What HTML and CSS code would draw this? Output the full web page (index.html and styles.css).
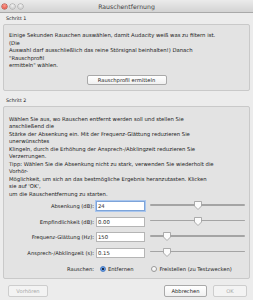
FILE: index.html
```html
<!DOCTYPE html>
<html lang="de">
<head>
    <meta charset="UTF-8">
    <title>Rauschentfernung</title>
    <link rel="stylesheet" href="styles.css">
</head>
<body>
    <div class="window">
        <div class="titlebar">
            <div class="lights">
                <span class="light red"></span>
                <span class="light"></span>
                <span class="light"></span>
            </div>
            <div class="title">Rauschentfernung</div>
        </div>

        <div class="content">
            <div class="group-label">Schritt 1</div>
            <div class="group step1">
                <div class="text">
                    <p>Einige Sekunden Rauschen auswählen, damit Audacity weiß was zu filtern ist.</p>
                    <p>(Die</p>
                    <p>Auswahl darf ausschließlich das reine Störsignal beinhalten!) Danach</p>
                    <p>"Rauschprofil</p>
                    <p>ermitteln" wählen.</p>
                </div>
                <div class="center">
                    <button class="btn profile-btn">Rauschprofil ermitteln</button>
                </div>
            </div>

            <div class="group-label label2">Schritt 2</div>
            <div class="group step2">
                <div class="text">
                    <p>Wählen Sie aus, wo Rauschen entfernt werden soll und stellen Sie</p>
                    <p>anschließend die</p>
                    <p>Stärke der Absenkung ein. Mit der Frequenz-Glättung reduzieren Sie</p>
                    <p>unerwünschtes</p>
                    <p>Klingeln, durch die Erhöhung der Ansprech-/Abklingzeit reduzieren Sie</p>
                    <p>Verzerrungen.</p>
                    <p>Tipp: Wählen Sie die Absenkung nicht zu stark, verwenden Sie wiederholt die</p>
                    <p>Vorhör-</p>
                    <p>Möglichkeit, um sich an das bestmögliche Ergebnis heranzutasten. Klicken</p>
                    <p>sie auf 'OK',</p>
                    <p>um die Rauschentfernung zu starten.</p>
                </div>

                <div class="params">
                    <div class="row">
                        <span class="label">Absenkung (dB):</span>
                        <span class="input focused">24</span>
                        <div class="slider">
                            <span class="track"></span>
                            <svg class="thumb" style="left: 44px" width="8" height="9" viewBox="0 0 8 9"><path d="M0.5 0.5 H7.5 V5 L4 8.5 L0.5 5 Z" fill="#fbfbfb" stroke="#9a9a9a" stroke-width="0.8"/></svg>
                        </div>
                    </div>
                    <div class="row">
                        <span class="label">Empfindlichkeit (dB):</span>
                        <span class="input">0.00</span>
                        <div class="slider">
                            <span class="track"></span>
                            <svg class="thumb" style="left: 44px" width="8" height="9" viewBox="0 0 8 9"><path d="M0.5 0.5 H7.5 V5 L4 8.5 L0.5 5 Z" fill="#fbfbfb" stroke="#9a9a9a" stroke-width="0.8"/></svg>
                        </div>
                    </div>
                    <div class="row">
                        <span class="label">Frequenz-Glättung (Hz):</span>
                        <span class="input">150</span>
                        <div class="slider">
                            <span class="track"></span>
                            <svg class="thumb" style="left: 13px" width="8" height="9" viewBox="0 0 8 9"><path d="M0.5 0.5 H7.5 V5 L4 8.5 L0.5 5 Z" fill="#fbfbfb" stroke="#9a9a9a" stroke-width="0.8"/></svg>
                        </div>
                    </div>
                    <div class="row">
                        <span class="label">Ansprech-/Abklingzeit (s):</span>
                        <span class="input">0.15</span>
                        <div class="slider">
                            <span class="track"></span>
                            <svg class="thumb" style="left: 13px" width="8" height="9" viewBox="0 0 8 9"><path d="M0.5 0.5 H7.5 V5 L4 8.5 L0.5 5 Z" fill="#fbfbfb" stroke="#9a9a9a" stroke-width="0.8"/></svg>
                        </div>
                    </div>
                    <div class="row radio-row">
                        <span class="label">Rauschen:</span>
                        <span class="radio checked"></span>
                        <span class="radio-text first">Entfernen</span>
                        <span class="radio"></span>
                        <span class="radio-text">Freistellen (zu Testzwecken)</span>
                    </div>
                </div>
            </div>

            <div class="footer">
                <button class="btn disabled wide">Vorhören</button>
                <div class="footer-right">
                    <button class="btn cancel">Abbrechen</button>
                    <button class="btn disabled ok">OK</button>
                </div>
            </div>
        </div>
    </div>
</body>
</html>
```

FILE: styles.css
```css
body {
    margin: 0;
    background-color: #ececec;
    font-family: "DejaVu Sans", "Liberation Sans", sans-serif;
    color: #222;
}

.window {
    width: 253px;
    height: 300px;
    background-color: #ececec;
    overflow: hidden;
}

.titlebar {
    height: 12px;
    background: linear-gradient(#ebebeb, #d3d3d3);
    border-bottom: 1px solid #a9a9a9;
    display: flex;
    align-items: center;
    position: relative;
}

.lights {
    display: flex;
    gap: 3px;
    padding-left: 2px;
}

.light {
    width: 5px;
    height: 5px;
    border-radius: 50%;
    background: radial-gradient(circle at 50% 35%, #f2f2f2, #bdbdbd);
    box-shadow: 0 0 0 0.5px #9c9c9c;
}

.light.red {
    background: radial-gradient(circle at 50% 35%, #ff9b8f, #d8402f);
    box-shadow: 0 0 0 0.5px #a33a2c;
}

.title {
    position: absolute;
    left: 0;
    right: 0;
    text-align: center;
    font-size: 6.2px;
    color: #444;
}

.content {
    padding: 0 3px;
}

.group-label {
    font-size: 4.8px;
    padding: 3px 0 0 3px;
    height: 6px;
    line-height: 6px;
}

.label2 {
    padding-top: 7px;
}

.group {
    background-color: #e3e3e3;
    border: 1px solid #c9c9c9;
    border-radius: 2px;
    margin-top: 2px;
}

.text {
    padding: 0 5px;
}

.text p {
    margin: 0;
    font-size: 5.3px;
    line-height: 7.5px;
    white-space: nowrap;
}

.step1 {
    padding: 7px 0 5px;
}

.step2 {
    padding: 9px 0 4px;
}

.center {
    display: flex;
    justify-content: center;
    margin-top: 5px;
}

.btn {
    font-family: inherit;
    font-size: 5.2px;
    color: #222;
    background: linear-gradient(#ffffff, #f0f0f0);
    border: 1px solid #a9a9a9;
    border-radius: 2px;
    padding: 0;
    height: 10px;
    line-height: 8px;
}

.profile-btn {
    width: 80px;
}

.params {
    margin-top: 3px;
    display: flex;
    flex-direction: column;
    gap: 5.5px;
}

.row {
    display: flex;
    align-items: center;
    height: 10px;
    white-space: nowrap;
}

.label {
    width: 90px;
    flex-shrink: 0;
    text-align: right;
    font-size: 5.2px;
    padding-right: 2px;
}

.input {
    box-sizing: border-box;
    width: 49px;
    height: 10px;
    background-color: #fff;
    border: 1px solid #b5b5b5;
    font-size: 5.3px;
    line-height: 8px;
    padding-left: 1px;
}

.input.focused {
    border-color: #7da4d9;
    box-shadow: 0 0 0 1px #a9c6ee;
}

.slider {
    position: relative;
    width: 95px;
    height: 10px;
    margin-left: 5px;
}

.track {
    position: absolute;
    left: 0;
    right: 0;
    top: 3px;
    height: 1.5px;
    background-color: #a4a4a4;
    border-radius: 1px;
}

.thumb {
    position: absolute;
    top: 0;
}

.radio-row {
    margin-top: 1px;
}

.radio {
    box-sizing: border-box;
    flex-shrink: 0;
    width: 6px;
    height: 6px;
    border-radius: 50%;
    border: 0.6px solid #9a9a9a;
    background: linear-gradient(#fff, #eee);
    margin-left: 4px;
}

.radio.checked {
    border-color: #4d7fc4;
    background: radial-gradient(circle, #1c2a44 0 1px, #6fa4e8 1.2px, #3c79d2 100%);
}

.radio-text {
    font-size: 5.2px;
    margin-left: 2px;
}

.radio-text.first {
    margin-right: 14px;
}

.footer {
    display: flex;
    justify-content: space-between;
    padding: 6px 3px 0 5px;
}

.footer-right {
    display: flex;
    gap: 6px;
}

.wide {
    width: 40px;
}

.btn.disabled {
    color: #a8a8a8;
    border-color: #cdcdcd;
    background: #f3f3f3;
}

.cancel {
    width: 43px;
}

.ok {
    width: 34px;
}

.footer .btn {
    height: 12px;
    line-height: 10px;
}
```
